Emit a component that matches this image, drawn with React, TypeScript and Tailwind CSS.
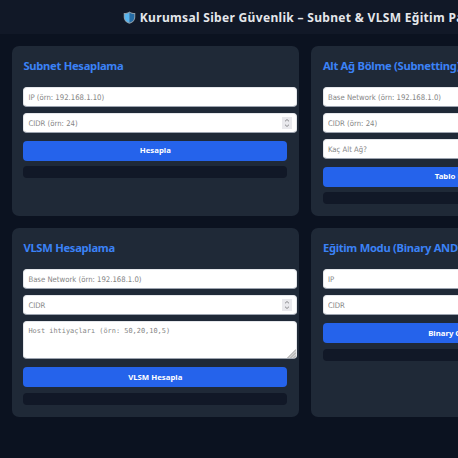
import type { ReactNode } from 'react'

const fieldClass =
  "block w-[273.4px] h-[20px] rounded-[4px] border border-[#e5e7eb] border-b-[#9ca3af] bg-white px-[4px] font-['DejaVu_Sans_Condensed','DejaVu_Sans',sans-serif] text-[7.7px] leading-[18px] text-black placeholder:text-[#858585] placeholder:opacity-100 outline-none"

function ShieldIcon() {
  return (
    <svg className="mb-[2px] w-[13px] h-[13px] shrink-0" viewBox="0 0 26 26">
      <path d="M13 1 C10 3 6 4 1.5 4 V12 C1.5 19 6 23 13 25.5 C20 23 24.5 19 24.5 12 V4 C20 4 16 3 13 1Z" fill="#8d9da8" />
      <path d="M13 3 C10 5 7 6 3.5 6 V12 C3.5 18 7 21.5 13 23.5Z" fill="#58b4ee" />
      <path d="M13 3 C16 5 19 6 22.5 6 V12 C22.5 18 19 21.5 13 23.5Z" fill="#256ca5" />
    </svg>
  )
}

function TextField({ placeholder }: { placeholder: string }) {
  return <input type="text" placeholder={placeholder} className={fieldClass} />
}

function NumberField({ placeholder, spinner }: { placeholder: string; spinner?: boolean }) {
  return (
    <div className="relative w-[273.4px]">
      <input type="text" inputMode="numeric" placeholder={placeholder} className={fieldClass} />
      {spinner && (
        <svg className="absolute right-[5px] top-[4px] w-[10px] h-[12px]" viewBox="0 0 10 12">
          <rect width="10" height="12" fill="#e9e9ed" />
          <path d="M3 4.3 L5 2.5 L7 4.3 M3 7.7 L5 9.5 L7 7.7" fill="none" stroke="#8b8b8f" />
        </svg>
      )}
    </div>
  )
}

function Card({ title, button, children }: { title: string; button: string; children: ReactNode }) {
  return (
    <section className="rounded-[7px] bg-[#1f2937] px-[11.9px] pt-[12px] pb-[12px]">
      <h2 className="h-[29px] whitespace-nowrap font-['Noto_Sans',sans-serif] text-[11.2px] font-bold leading-[16px] tracking-[-0.28px] text-[#3b82f6]">
        {title}
      </h2>
      <div className="flex flex-col gap-[6.05px]">{children}</div>
      <button className="mt-[8px] block h-[19.5px] w-full rounded-[4px] bg-[#2563eb] font-['Noto_Sans',sans-serif] text-[7.8px] font-bold leading-[19px] text-white">
        {button}
      </button>
      <div className="mt-[5.6px] h-[12px] rounded-[4px] bg-[#111827]" />
    </section>
  )
}

export default function App() {
  return (
    <div className="h-[458px] w-full overflow-hidden bg-[#0b1220]">
      <div className="w-[610px]">
        <header className="flex h-[34px] items-center justify-center gap-[4px] bg-[#111827] pt-[2px]">
          <ShieldIcon />
          <h1 className="whitespace-nowrap font-['Noto_Sans',sans-serif] text-[12px] font-bold leading-[16px] tracking-[0.32px] text-[#e5e7eb]">
            Kurumsal Siber Güvenlik – Subnet &amp; VLSM Eğitim Paneli
          </h1>
        </header>

        <main className="grid grid-cols-[287.5px_287.5px] grid-rows-[170.4px_188.5px] gap-[12px] px-[11.5px] pt-[12px]">
          <Card title="Subnet Hesaplama" button="Hesapla">
            <TextField placeholder="IP (örn: 192.168.1.10)" />
            <NumberField placeholder="CIDR (örn: 24)" spinner />
          </Card>

          <Card title="Alt Ağ Bölme (Subnetting)" button="Tablo Üret">
            <TextField placeholder="Base Network (örn: 192.168.1.0)" />
            <NumberField placeholder="CIDR (örn: 24)" />
            <NumberField placeholder="Kaç Alt Ağ?" />
          </Card>

          <Card title="VLSM Hesaplama" button="VLSM Hesapla">
            <TextField placeholder="Base Network (örn: 192.168.1.0)" />
            <NumberField placeholder="CIDR" spinner />
            <div className="relative h-[38px] w-[273.4px]">
              <textarea
                placeholder="Host ihtiyaçları (örn: 50,20,10,5)"
                className="block h-[38px] w-[273.4px] resize-none rounded-[4px] border border-[#e5e7eb] border-b-[#9ca3af] bg-white px-[4px] pt-[4px] font-['DejaVu_Sans_Mono',monospace] text-[6.93px] leading-[10px] text-black placeholder:text-[#858585] placeholder:opacity-100 outline-none"
              />
              <svg className="absolute right-[1px] bottom-[1px] w-[9px] h-[9px]" viewBox="0 0 9 9">
                <path d="M0 9 L9 0 V7 Q9 9 7 9Z" fill="#d4d4d4" />
                <path d="M0.5 9 L9 0.5 M3.5 9 L9 3.5 M6.5 9 L9 6.5" fill="none" stroke="#999999" strokeWidth="0.8" />
              </svg>
            </div>
          </Card>

          <Card title="Eğitim Modu (Binary AND)" button="Binary Göster">
            <TextField placeholder="IP" />
            <NumberField placeholder="CIDR" />
          </Card>
        </main>
      </div>
    </div>
  )
}
